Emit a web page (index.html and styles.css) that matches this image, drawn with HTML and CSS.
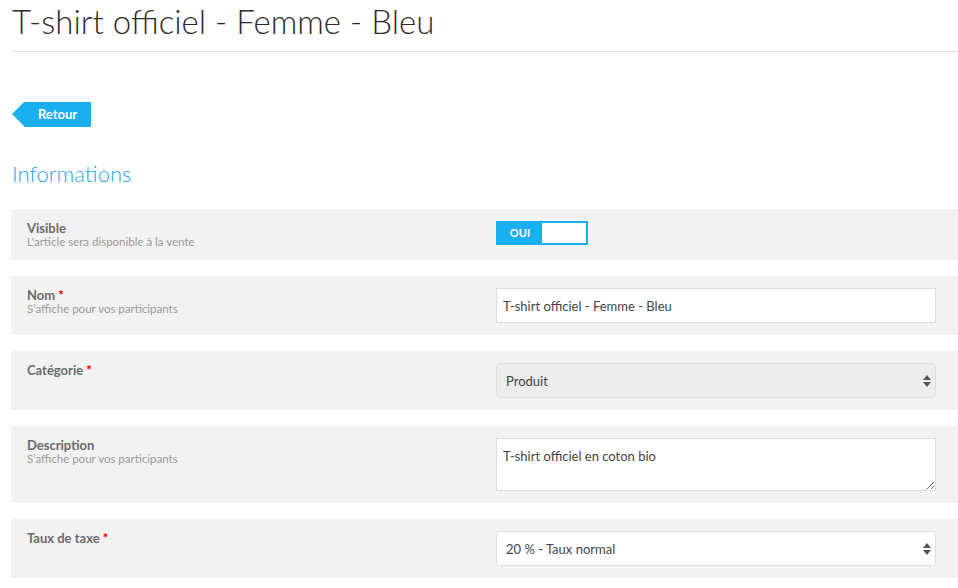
FILE: index.html
```html
<!DOCTYPE html>
<html lang="fr">
    <head>
        <meta charset="utf-8">
        <title>T-shirt officiel - Femme - Bleu</title>
        <link rel="stylesheet" href="styles.css">
    </head>
    <body>
        <div class="page">
            <h1 class="title">T-shirt officiel - Femme - Bleu</h1>

            <a class="back" href="#">Retour</a>

            <h2 class="section">Informations</h2>

            <div class="row">
                <div class="label">
                    <span class="name">Visible</span>
                    <span class="help">L'article sera disponible à la vente</span>
                </div>
                <div class="field">
                    <div class="toggle">
                        <span class="toggle-on">OUI</span>
                        <span class="toggle-off"></span>
                    </div>
                </div>
            </div>

            <div class="row">
                <div class="label">
                    <span class="name">Nom <b class="req">*</b></span>
                    <span class="help">S’affiche pour vos participants</span>
                </div>
                <div class="field">
                    <input class="text" type="text" value="T-shirt officiel - Femme - Bleu">
                </div>
            </div>

            <div class="row">
                <div class="label">
                    <span class="name">Catégorie <b class="req">*</b></span>
                </div>
                <div class="field">
                    <div class="select grey">
                        <span>Produit</span>
                        <i class="arrows"></i>
                    </div>
                </div>
            </div>

            <div class="row">
                <div class="label">
                    <span class="name">Description</span>
                    <span class="help">S’affiche pour vos participants</span>
                </div>
                <div class="field">
                    <textarea class="area">T-shirt officiel en coton bio</textarea>
                </div>
            </div>

            <div class="row">
                <div class="label">
                    <span class="name">Taux de taxe <b class="req">*</b></span>
                </div>
                <div class="field">
                    <div class="select">
                        <span>20 % - Taux normal</span>
                        <i class="arrows"></i>
                    </div>
                </div>
            </div>
        </div>
    </body>
</html>
```

FILE: styles.css
```css
body {
    margin: 0;
    font-family: "Lato", "Open Sans", sans-serif;
    color: #333;
    background: #fff;
}

.page {
    padding: 0 0 0 11px;
}

h1.title {
    margin: 0;
    padding: 2px 0 11px 1px;
    font-size: 33px;
    font-weight: 300;
    line-height: 38px;
    color: #2e2a2a;
    border-bottom: 1px solid #e3e3e3;
}

/* back button with arrow */
a.back {
    position: relative;
    display: inline-block;
    margin: 50px 0 0 13px;
    width: 67px;
    height: 25px;
    line-height: 25px;
    background: #1ab0f0;
    color: #fff;
    font-size: 13px;
    font-weight: 700;
    text-align: center;
    text-decoration: none;
}

a.back::before {
    content: "";
    position: absolute;
    left: -12px;
    top: 0;
    border-style: solid;
    border-width: 12.5px 12px 12.5px 0;
    border-color: transparent #1ab0f0 transparent transparent;
}

h2.section {
    margin: 33px 0 21px 1px;
    font-size: 22px;
    font-weight: 300;
    line-height: 28px;
    color: #1fa6ea;
}

.row {
    display: grid;
    grid-template-columns: 469px 440px;
    padding: 12px 22px 12px 16px;
    margin-bottom: 16px;
    background: #f2f2f2;
}

.label {
    display: flex;
    flex-direction: column;
}

.name {
    font-size: 13px;
    font-weight: 700;
    line-height: 14px;
    color: #6a6a6a;
}

.req {
    color: #e00;
}

.help {
    font-size: 11.5px;
    line-height: 13px;
    color: #999;
}

.toggle {
    display: flex;
    width: 88px;
    height: 20px;
    border: 2px solid #1ab0f0;
}

.toggle-on {
    width: 44px;
    background: #1ab0f0;
    color: #fff;
    font-size: 11px;
    font-weight: 700;
    line-height: 20px;
    text-align: center;
}

.toggle-off {
    flex: 1;
    background: #fff;
}

input.text, textarea.area {
    box-sizing: border-box;
    width: 440px;
    margin: 0;
    border: 1px solid #ddd;
    background: #fff;
    font-family: inherit;
    font-size: 13px;
    color: #444;
    outline: none;
}

input.text {
    height: 35px;
    padding: 0 6px;
}

textarea.area {
    display: block;
    height: 53px;
    padding: 9px 6px;
    resize: vertical;
}

.select {
    box-sizing: border-box;
    display: flex;
    align-items: center;
    justify-content: space-between;
    width: 440px;
    height: 35px;
    padding: 0 4px 0 9px;
    border: 1px solid #ddd;
    border-radius: 4px;
    background: #fff;
    font-size: 13px;
    color: #444;
}

.select.grey {
    background: #ececec;
}

.arrows {
    position: relative;
    width: 8px;
    height: 12px;
}

.arrows::before, .arrows::after {
    content: "";
    position: absolute;
    left: 0;
    border-left: 4px solid transparent;
    border-right: 4px solid transparent;
}

.arrows::before {
    top: 0;
    border-bottom: 5px solid #555;
}

.arrows::after {
    bottom: 0;
    border-top: 5px solid #555;
}
```
